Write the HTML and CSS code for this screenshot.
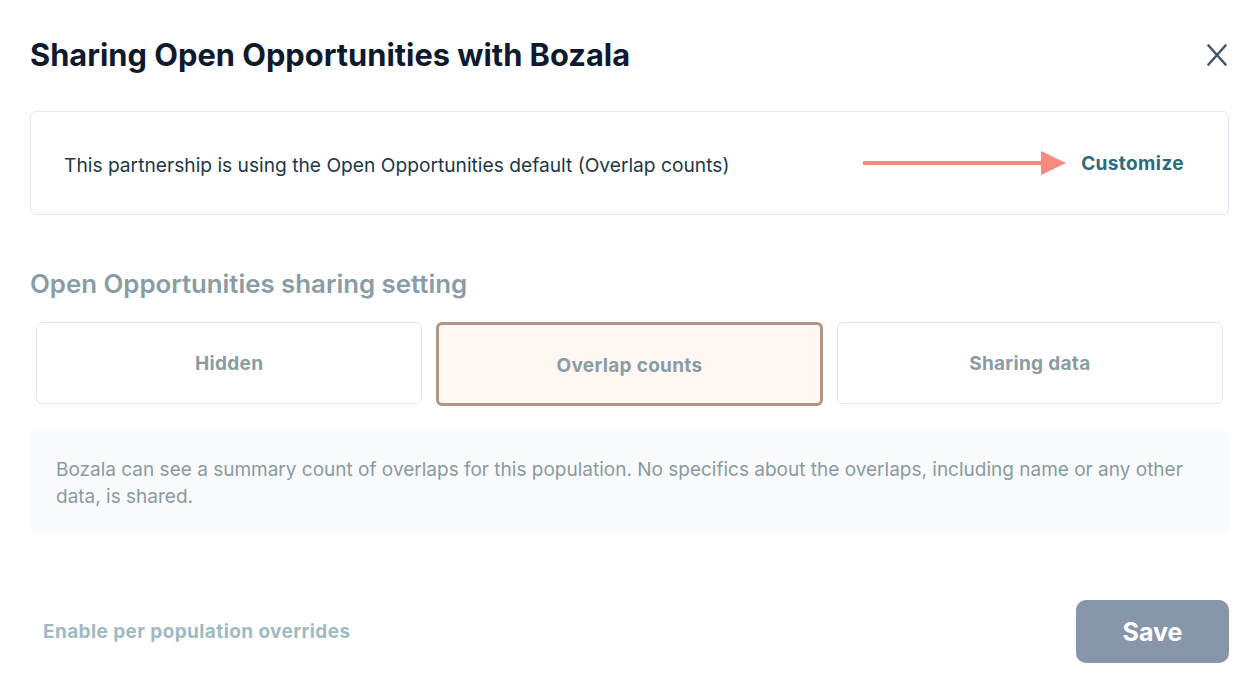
FILE: index.html
```html
<!DOCTYPE html>
<html lang="en">
<head>
    <meta charset="UTF-8">
    <meta name="viewport" content="width=device-width, initial-scale=1.0">
    <title>Sharing Open Opportunities with Bozala</title>
    <link rel="stylesheet" href="styles.css">
</head>
<body>

<div class="modal">
    <!-- Header -->
    <div class="modal-header">
        <h1 class="modal-title">Sharing Open Opportunities with Bozala</h1>
        <button class="close-btn" aria-label="Close">
            <svg width="20" height="22" viewBox="0 0 20 22">
                <path d="M1.5 1.5 L18.5 20.5 M18.5 1.5 L1.5 20.5" stroke="#46566b" stroke-width="2.6" stroke-linecap="round" fill="none"/>
            </svg>
        </button>
    </div>

    <!-- Default notice -->
    <div class="notice">
        <span class="notice-text">This partnership is using the Open Opportunities default (Overlap counts)</span>
        <div class="notice-action">
            <svg class="arrow" width="203" height="24" viewBox="0 0 203 24">
                <rect x="0" y="10" width="180" height="4" fill="#fa8a7e"/>
                <polygon points="178,0 203,12 178,24" fill="#fa8a7e"/>
            </svg>
            <button class="customize-btn">Customize</button>
        </div>
    </div>

    <!-- Sharing setting -->
    <h2 class="section-title">Open Opportunities sharing setting</h2>
    <div class="options">
        <div class="option">Hidden</div>
        <div class="option selected">Overlap counts</div>
        <div class="option">Sharing data</div>
    </div>

    <div class="description">
        Bozala can see a summary count of overlaps for this population. No specifics about the overlaps, including name or any other data, is shared.
    </div>

    <!-- Footer -->
    <div class="modal-footer">
        <button class="override-link">Enable per population overrides</button>
        <button class="save-btn">Save</button>
    </div>
</div>

</body>
</html>
```

FILE: styles.css
```css
body {
    margin: 0;
    font-family: Inter, "Noto Sans", sans-serif;
    background-color: white;
}

button {
    font-family: inherit;
    background: none;
    border: none;
    padding: 0;
    cursor: pointer;
}

.modal {
    padding: 35px 30px 0 30px;
}

.modal-header {
    display: flex;
    justify-content: space-between;
    align-items: center;
}

.modal-title {
    margin: 0;
    font-size: 30.8px;
    line-height: 40px;
    font-weight: 700;
    color: #0f1a2e;
}

.close-btn {
    display: flex;
    margin-right: 2px;
}

.notice {
    margin-top: 36px;
    height: 102px;
    border: 1px solid #e2e8ef;
    border-radius: 6px;
    display: flex;
    align-items: center;
    justify-content: space-between;
    padding: 0 44px 0 33px;
}

.notice-text {
    padding-top: 4px;
    font-size: 19.2px;
    color: #1c3849;
}

.notice-action {
    display: flex;
    align-items: center;
    gap: 15px;
}

.customize-btn {
    font-size: 19px;
    font-weight: 700;
    letter-spacing: 0.4px;
    color: #2a6c7d;
}

.section-title {
    margin: 53px 0 0 0;
    font-size: 25.8px;
    line-height: 32px;
    font-weight: 600;
    color: #889da5;
}

.options {
    display: grid;
    grid-template-columns: repeat(3, 1fr);
    gap: 14px;
    margin: 22px 6px 0 6px;
}

.option {
    height: 80px;
    border: 1px solid #e2e8ef;
    border-radius: 6px;
    display: flex;
    align-items: center;
    justify-content: center;
    font-size: 19px;
    font-weight: 700;
    letter-spacing: 0.3px;
    color: #8a9da5;
}

.option.selected {
    height: 76px;
    border: 3px solid #b39585;
    background-color: #fff7f1;
    padding-top: 2px;
}

.description {
    margin-top: 25px;
    background-color: #f8fafc;
    border-radius: 6px;
    padding: 25px 40px 23px 26px;
    font-size: 19px;
    line-height: 27px;
    color: #8a9ba1;
}

.modal-footer {
    margin-top: 67px;
    display: flex;
    justify-content: space-between;
    align-items: center;
}

.override-link {
    margin-left: 13px;
    font-size: 19px;
    font-weight: 700;
    letter-spacing: 0.4px;
    color: #9ebbc4;
}

.save-btn {
    width: 153px;
    height: 63px;
    border-radius: 10px;
    background-color: #8796ab;
    color: white;
    font-size: 25px;
    font-weight: 700;
}
```
